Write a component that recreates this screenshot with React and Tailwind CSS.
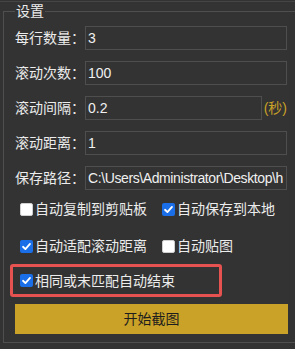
import React from "react";

const font = "font-['Liberation_Sans','Noto_Sans_CJK_SC',sans-serif]";

function Box({ checked }) {
  return checked ? (
    <span className="w-[13px] h-[13px] rounded-[2px] bg-[#1a6fe8] flex items-center justify-center shrink-0">
      <svg width="11" height="11" viewBox="0 0 12 12">
        <path d="M2.2 6.3 L4.8 8.8 L9.8 3.2" fill="none" stroke="#fff" strokeWidth="2" strokeLinecap="round" strokeLinejoin="round" />
      </svg>
    </span>
  ) : (
    <span className="w-[13px] h-[13px] rounded-[2px] bg-white border border-[#cfcfcf] shrink-0" />
  );
}

function Check({ checked, label, className = "" }) {
  return (
    <div className={`flex items-center gap-[2px] h-[20px] ${className}`}>
      <Box checked={checked} />
      <span className="text-[14px] leading-[20px] text-[#ececec] whitespace-nowrap">{label}</span>
    </div>
  );
}

function Row({ label, value, suffix, tight }) {
  return (
    <div className="flex items-center h-[24px]">
      <span className="w-[70px] shrink-0 text-[14px] text-[#ececec] whitespace-nowrap">{label}</span>
      <div
        className={`h-[24px] border border-[#4e4e4e] bg-[#333333] flex items-center pl-[2px] overflow-hidden ${
          suffix ? "w-[178px]" : "flex-1"
        }`}
      >
        <span className={`text-[14px] text-[#f0f0f0] whitespace-nowrap ${tight ? "tracking-[-0.4px]" : ""}`}>{value}</span>
      </div>
      {suffix && <span className="ml-[2px] text-[14px] text-[#c9a227] whitespace-nowrap">{suffix}</span>}
    </div>
  );
}

export default function App() {
  return (
    <div className={`w-[295px] h-[349px] bg-[#333333] overflow-hidden ${font}`}>
      <div className="h-[1px]" />
      <div className="h-[1px] bg-[#454545]" />
      <fieldset className="ml-[3px] w-[310px] border border-[#4f4f4f] pl-[11px] pb-[8px] pt-[6px]">
        <legend className="px-[1px] text-[14px] leading-[18px] text-[#ececec]">设置</legend>
        <div className="w-[272px] flex flex-col">
          <div className="flex flex-col gap-[11px]">
            <Row label="每行数量：" value="3" />
            <Row label="滚动次数：" value="100" />
            <Row label="滚动间隔：" value="0.2" suffix="(秒)" />
            <Row label="滚动距离：" value="1" />
            <Row label="保存路径：" value="C:\Users\Administrator\Desktop\h" tight />
          </div>
          <div className="mt-[9px] flex pl-[5px]">
            <Check checked={false} label="自动复制到剪贴板" className="w-[142px]" />
            <Check checked={true} label="自动保存到本地" />
          </div>
          <div className="mt-[17px] flex pl-[5px]">
            <Check checked={true} label="自动适配滚动距离" className="w-[142px]" />
            <Check checked={false} label="自动贴图" />
          </div>
          <div className="mt-[8px] -ml-[5px] w-[212px] h-[33px] border-[3px] border-[#e5524f] rounded-[3px] flex items-center pl-[7px]">
            <Check checked={true} label="相同或末匹配自动结束" />
          </div>
          <div className="mt-[7px] h-[30px] w-[273px] bg-[#c9a227] flex items-center justify-center">
            <span className="text-[14px] text-[#1e1e1e]">开始截图</span>
          </div>
        </div>
      </fieldset>
    </div>
  );
}
